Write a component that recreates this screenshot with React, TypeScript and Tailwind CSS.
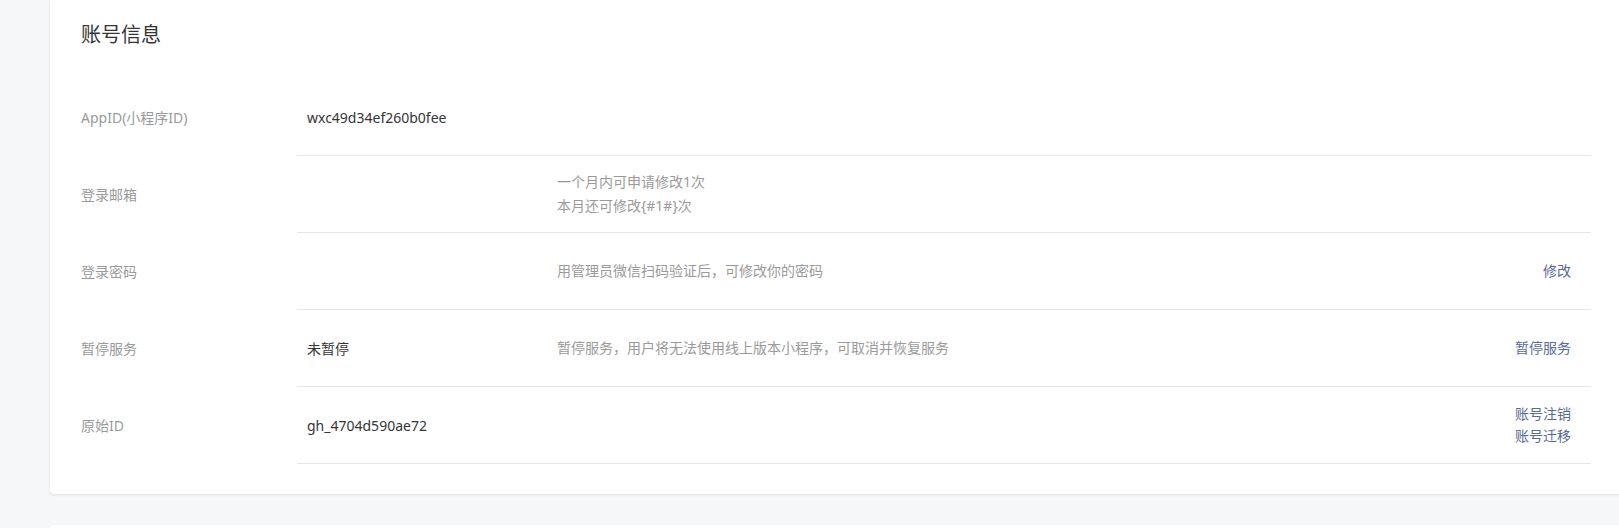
import React from 'react';

type Row = {
  label: string;
  value?: string;
  desc?: string[];
  actions?: string[];
};

const rows: Row[] = [
  { label: 'AppID(小程序ID)', value: 'wxc49d34ef260b0fee' },
  { label: '登录邮箱', desc: ['一个月内可申请修改1次', '本月还可修改{#1#}次'] },
  { label: '登录密码', desc: ['用管理员微信扫码验证后，可修改你的密码'], actions: ['修改'] },
  {
    label: '暂停服务',
    value: '未暂停',
    desc: ['暂停服务，用户将无法使用线上版本小程序，可取消并恢复服务'],
    actions: ['暂停服务'],
  },
  { label: '原始ID', value: 'gh_4704d590ae72', actions: ['账号注销', '账号迁移'] },
];

export default function App() {
  return (
    <div
      className="h-[528px] w-full overflow-hidden bg-[#f6f7f9] text-[14px]"
      style={{ fontFamily: '"Noto Sans", "Noto Sans CJK SC", sans-serif' }}
    >
      <div className="ml-[50px] w-[1572px] rounded-b-[4px] bg-white px-[31px] pb-[30px] pt-[21px] shadow-[0_1px_3px_rgba(0,0,0,0.1)]">
        <h2 className="text-[20px] leading-[28px] font-normal text-[#353535]">账号信息</h2>
        <div className="mt-[30px]">
          {rows.map((row) => (
            <div key={row.label} className="flex">
              <div className="flex w-[216px] shrink-0 items-center text-[#9a9a9a]">{row.label}</div>
              <div className="flex h-[77px] flex-1 items-center border-b border-[#e7e7eb]">
                <div className="w-[260px] shrink-0 pl-[10px] text-[#353535]">{row.value}</div>
                <div className="flex-1 leading-[24px] text-[#9a9a9a]">
                  {row.desc?.map((d) => (
                    <div key={d}>{d}</div>
                  ))}
                </div>
                <div className="pr-[20px] text-right leading-[22px] text-[#576b95]">
                  {row.actions?.map((a) => (
                    <div key={a}>
                      <a href="#" className="hover:underline">
                        {a}
                      </a>
                    </div>
                  ))}
                </div>
              </div>
            </div>
          ))}
        </div>
      </div>
      <div className="ml-[50px] mt-[31px] h-[100px] w-[1572px] rounded-t-[4px] bg-white shadow-[0_1px_3px_rgba(0,0,0,0.1)]" />
    </div>
  );
}
